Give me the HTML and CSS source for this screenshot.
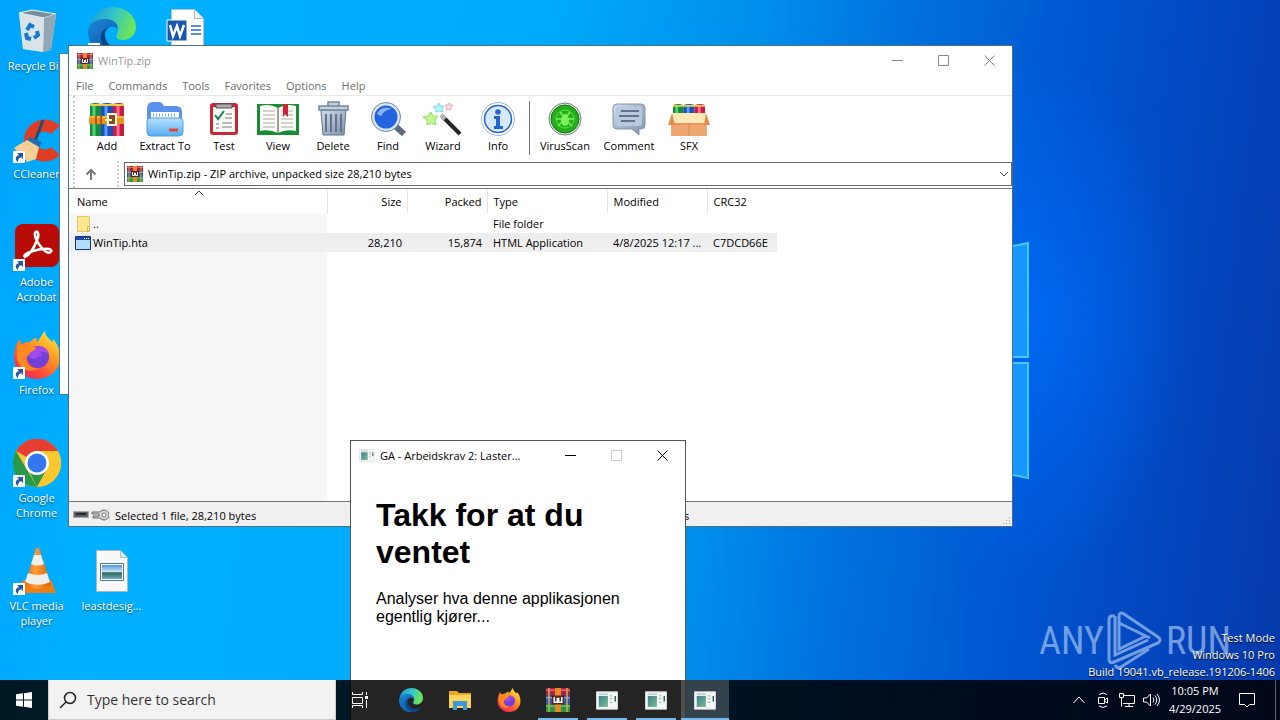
FILE: index.html
```html
<!DOCTYPE html>
<html lang="en">
<head>
<meta charset="utf-8">
<title>Desktop</title>
<link rel="stylesheet" href="styles.css">
</head>
<body>
<svg class="defs" aria-hidden="true">
  <defs>
    <linearGradient id="gEdge" x1="0" y1="0" x2="1" y2="0.3"><stop offset="0" stop-color="#1399dc"/><stop offset=".55" stop-color="#35c4c8"/><stop offset="1" stop-color="#6be45c"/></linearGradient>
    <linearGradient id="gEdge2" x1="0" y1="0" x2="1" y2="1"><stop offset="0" stop-color="#1b86d8"/><stop offset="1" stop-color="#0c4a92"/></linearGradient>
    <linearGradient id="gFox" x1=".9" y1="0" x2=".2" y2="1"><stop offset="0" stop-color="#fff14a"/><stop offset=".4" stop-color="#ff9a1f"/><stop offset=".75" stop-color="#ff4a3c"/><stop offset="1" stop-color="#e5265f"/></linearGradient>
    <linearGradient id="gBlue" x1="0" y1="0" x2="0" y2="1"><stop offset="0" stop-color="#b9e2ff"/><stop offset="1" stop-color="#58aef2"/></linearGradient>
    <linearGradient id="gSteel" x1="0" y1="0" x2="1" y2="1"><stop offset="0" stop-color="#d3deec"/><stop offset="1" stop-color="#7d90ab"/></linearGradient>
    <linearGradient id="gPic" x1="0" y1="0" x2="0" y2="1"><stop offset="0" stop-color="#4d94e0"/><stop offset=".5" stop-color="#cfe7f5"/><stop offset=".55" stop-color="#2c6652"/><stop offset="1" stop-color="#6fa8c4"/></linearGradient>
    <linearGradient id="gTeal" x1="0" y1="0" x2="1" y2="1"><stop offset="0" stop-color="#3f8494"/><stop offset="1" stop-color="#76b98c"/></linearGradient>
    <linearGradient id="gCone" x1="0" y1="0" x2="1" y2="0"><stop offset="0" stop-color="#e06a06"/><stop offset=".4" stop-color="#ff9a35"/><stop offset="1" stop-color="#d96504"/></linearGradient>
    <symbol id="edge" viewBox="0 0 48 48">
      <path d="M1 22C2 9 12 0 25 0c13 0 23 9 23 20 0 8-6 13-13 13-6 0-8-3-6-6 3-5-1-12-10-12C10 15 3 19 1 22z" fill="url(#gEdge)"/>
      <path d="M0 24C1 16 8 12 17 12c8 0 13 4 13 10-5-5-13-2-13 6 0 9 9 15 18 14 4 0 8-2 10-4-4 7-12 11-20 11C10 49 0 38 0 24z" fill="url(#gEdge2)"/>
      <path d="M17 28c0-4 2-8 6-9-7 1-11 7-10 14 1 8 8 14 17 15 7-1 12-5 15-10-3 3-7 4-11 4-10 0-17-6-17-14z" fill="#0a4384"/>
    </symbol>
    <symbol id="firefox" viewBox="0 0 48 48">
      <path d="M3 15c1-3 2-5 4-7 0 3 1 4 2 5 3-2 6-2 8-2 2-2 4-4 7-4-1 2-1 3 0 4 3-3 4-7 8-11 0 5 4 7 7 11 1-1 1-2 1-3 4 4 7 11 7 18 0 13-10 22-23 22S1 38 1 26c0-4 1-8 2-11z" fill="url(#gFox)"/>
      <circle cx="25" cy="26" r="11" fill="#7040d8"/>
      <path d="M14 22c3-5 10-8 16-6 4 2 6 5 6 8-3-3-6-4-9-3 1 1 2 2 2 4-3 0-5 1-7 3-3 0-6-2-8-6z" fill="#a04bea"/>
      <path d="M5 14c3-1 6 0 8 2 4-2 8-1 10 1-1 3-4 3-6 5-1 2-4 3-4 7 1 5 6 9 12 8-4 4-14 4-18-3-4-6-4-14-2-20z" fill="#ff8a22"/>
    </symbol>
    <symbol id="rar" viewBox="0 0 16 16">
      <path fill="#a52145" d="M0 0h16v5H0z"/><path fill="#2f55b5" d="M0 5h16v6H0z"/><path fill="#25964a" d="M0 11h16v5H0z"/>
      <path stroke="#ed637f" d="M0 1.500h16"/><path stroke="#729ce5" d="M0 6.500h16"/><path stroke="#64c76c" d="M0 12h16"/>
      <path d="M2 0v16M14 0v16" stroke="#d9a944"/>
      <path fill="#e98922" d="M6 0h4v16H6z"/><path fill="#5c2620" d="M4 5h8v6H4z"/><path d="M5.500 6v3.500h2V7h1v2.500h2V6" fill="none" stroke="#fff"/>
    </symbol>
    <symbol id="app" viewBox="0 0 24 20">
      <path d="M.5.500h23v19H.500z" fill="#f5f7f7" stroke="#d7dbdc"/><path fill="url(#gTeal)" d="M3 5h10v12H3z"/><path d="M3 3h10M15 5h3M15 8h3M15 12h3" stroke="#9eabb0"/><path d="M21 5v6" stroke="#29535e" stroke-width="1.500"/>
    </symbol>
    <symbol id="shortcut" viewBox="0 0 12 12"><path d="M0 0h12v12H0z" fill="#fff"/><path d="M4 2h6v6L8 6C6 7 5 8 5 11 1 8 3 5 6 4z" fill="#24579e"/></symbol>
    <symbol id="books" viewBox="0 0 34 34">
      <path fill="#148a42" d="M0 2q5-2 11 0v32H0z"/><path fill="#1c4fb8" d="M11 2q6-2 12 0v32H11z"/><path fill="#c61c45" d="M23 2q6-2 11 0v32H23z"/>
      <path d="M4 2v32" stroke="#5ad06c" stroke-width="3"/><path d="M16 2v32" stroke="#5c9cf8" stroke-width="3"/><path d="M28 2v32" stroke="#ff6f86" stroke-width="3"/>
      <path d="M0 3h11M11 3h12M23 3h11" stroke="#e8cf4a" stroke-width="2"/>
    </symbol>
  </defs>
</svg>

<main class="desktop">
  <svg class="pane-logo" viewBox="0 0 16 240" preserveAspectRatio="none" aria-hidden="true"><path d="M0 5 15 2v114H0zM0 122h15v115L0 234z" fill="#1696ff"/><path d="M0 5 15 2v114H0M0 122h15v115L0 234" fill="none" stroke="#43c8ff" stroke-width="2"/></svg>

  <div class="icons">
    <div class="icon c1 r1"><svg viewBox="0 0 48 48"><path d="M6 6 19 3 43 7 38 43 30 45 10 42z" fill="#c5d4df"/><path d="M6 6 19 3 43 7 31 11z" fill="#7790a0" stroke="#eef5f8"/><path d="M31 11 43 7 38 43 30 45z" fill="#93a6b4"/><path d="M6 6 31 11 30 45 10 42z" fill="#dce5e9" opacity=".9"/><path d="m14 23 3-5 4 2M24 24l1 4-4 3M18 32l-4-1-1-5" fill="none" stroke="#1479cf" stroke-width="4"/></svg><span>Recycle Bin</span></div>
    <div class="icon c1 r2"><svg viewBox="0 0 48 48"><path d="M47 11A21 21 0 1 0 47 40l-9-8a9 9 0 1 1 0-13z" fill="#df3d24"/><path d="M30 5 21 29" stroke="#1b4e7b" stroke-width="3"/><path d="m16 22 13 5-4 8-13-7z" fill="#246eae"/><path d="M1 33c5-4 9-5 13-8l12 7-3 12-9 3c-2-5-8-8-13-14z" fill="#f4cf96"/></svg><svg class="shortcut"><use href="#shortcut"/></svg><span>CCleaner</span></div>
    <div class="icon c1 r3"><svg viewBox="0 0 48 48"><rect x="2" y="1" width="44" height="43" rx="8" fill="#b90c06"/><path d="M12 34c-4-3 13-9 24-8 5 1 1 6-4 2-5-4-11-13-10-18 2-4 5 1 2 7-3 8-8 15-12 17z" fill="none" stroke="#fff" stroke-width="2.500"/></svg><svg class="shortcut"><use href="#shortcut"/></svg><span>Adobe<br>Acrobat</span></div>
    <div class="icon c1 r4"><svg><use href="#firefox"/></svg><svg class="shortcut"><use href="#shortcut"/></svg><span>Firefox</span></div>
    <div class="icon c1 r5"><svg viewBox="0 0 48 48"><circle cx="24" cy="24" r="24" fill="#fbc72f"/><path d="M24 24 3 12a24 24 0 0 1 42 0z" fill="#e63e31"/><path d="M3 12 24 48A24 24 0 0 1 3 12z" fill="#269a49"/><path d="m15 30 9 18 11-19z" fill="#269a49"/><path d="M24 48a24 24 0 0 0 21-36H24l10 18z" fill="#fbc72f"/><circle cx="24" cy="24" r="12" fill="#fff"/><circle cx="24" cy="24" r="9.500" fill="#3476ee"/></svg><svg class="shortcut"><use href="#shortcut"/></svg><span>Google<br>Chrome</span></div>
    <div class="icon c1 r6"><svg viewBox="0 0 48 48"><path d="M10 33h28l5 13H6z" fill="#ef7d13"/><path d="M23 1h3l12 37c-6 5-18 5-26 0z" fill="url(#gCone)"/><path d="M21 8h7l3 9q-7 3-13 0zM15 26q10 4 19 0l3 9q-12 6-25 0z" fill="#eeeeea"/></svg><svg class="shortcut"><use href="#shortcut"/></svg><span>VLC media<br>player</span></div>
    <div class="icon c2 r1"><svg><use href="#edge"/></svg><svg class="shortcut"><use href="#shortcut"/></svg></div>
    <div class="icon c2 r6"><svg viewBox="0 0 48 48"><path d="M8.500 3.500h24l7 7v34h-31z" fill="#f8f8f8" stroke="#aeb7bd"/><path d="M32.500 3.500v7h7" fill="#dcebf2" stroke="#aac3cf"/><path d="M12.500 16.500h23v17h-23z" fill="#fff" stroke="#507795"/><path d="M14 18h20v14H14z" fill="url(#gPic)"/></svg><span>leastdesig...</span></div>
    <div class="icon c3 r1"><svg viewBox="0 0 48 48"><path d="M8.500 2.500h23l9 9v34h-32z" fill="#fff" stroke="#bac2c8"/><path d="M31.500 2.500v9h9" fill="#edf1f5" stroke="#b0b8c0"/><path d="M28 19h10M28 23h10M28 27h10" stroke="#286bb5" stroke-width="1.500"/><path d="M4 13h20v21H4z" fill="#1856b0" stroke="#fff"/><path d="m7 18 3 11 4-10 3 10 4-11" fill="none" stroke="#fff" stroke-width="2.500"/></svg></div>
  </div>

  <div class="back-window"></div>

  <section class="window archive">
    <header class="titlebar">
      <svg class="app16"><use href="#rar"/></svg><span class="title">WinTip.zip</span>
      <button class="ctl" aria-label="Minimize"><svg viewBox="0 0 11 11"><path d="M0 5.500h11"/></svg></button>
      <button class="ctl" aria-label="Maximize"><svg viewBox="0 0 11 11"><path d="M.5.500h10v10H.500z"/></svg></button>
      <button class="ctl" aria-label="Close"><svg viewBox="0 0 11 11"><path d="m.5.500 10 10M10.500.500l-10 10"/></svg></button>
    </header>
    <nav class="menu"><button>File</button><button>Commands</button><button>Tools</button><button>Favorites</button><button>Options</button><button>Help</button></nav>
    <div class="toolbar">
      <button class="w50"><svg viewBox="0 0 40 36"><use href="#books" x="3" y="1" width="34" height="34"/><path d="M2 15h35v8H2z" fill="#e8931c"/><path d="M2 16h35" stroke="#ffdb73"/><path d="M9 14v10M14 14v10" stroke="#a95b16" stroke-width="2"/><path d="M21 13h8v11h-8zM18 19h7" fill="#825026" stroke="#fff4d8" stroke-width="2"/></svg>Add</button>
      <button class="w66"><svg viewBox="0 0 40 36"><path d="M2 8q0-7 6-7h6q3 0 5 4h12q6 0 6 6v18H2z" fill="#5a91ed"/><path d="M6 11h28v14H6z" fill="#f9fcff"/><path d="M8 14h24" stroke="#91a7ba" stroke-dasharray="1 2" stroke-width="3"/><path d="M2 20q0-3 4-3h29q3 0 3 4v10q0 4-4 4H6q-4 0-4-4z" fill="url(#gBlue)" stroke="#4c9ee9"/><path d="M24 29h9" stroke="#de4739" stroke-width="3"/></svg>Extract To</button>
      <button class="w52"><svg viewBox="0 0 40 36"><rect x="6" y="2" width="28" height="32" rx="3" fill="#cb2636"/><path d="M9 6h22v25H9z" fill="#f8faf8"/><path d="M12 3h16v4H12z" fill="#aaa" stroke="#555"/><path d="M11 14l3 4 6-8" fill="none" stroke="#14834a" stroke-width="2"/><path d="M22 13h6M21 17h7M12 23h3M18 22h10M12 27h3M18 26h10" stroke="#777"/></svg>Test</button>
      <button class="w56"><svg class="wide" viewBox="0 0 44 36"><path d="M1 3h42v31H1z" fill="#178b36"/><path d="M4 5q10-3 18 2 9-5 18-2v25q-10-2-18 2-9-4-18-2z" fill="#fafaf4"/><path d="M22 7v25" stroke="#9d9d94" stroke-width="2"/><path d="M7 10h12M7 14h12M7 18h12M7 22h12M7 26h12M25 10h12M25 14h12M25 18h12M25 22h12M25 26h12" stroke="#aaa"/><path d="M27 3h5v13l-3-3-2 3z" fill="#d11f37"/></svg>View</button>
      <button class="w54"><svg viewBox="0 0 40 36"><path d="M8 9h25l-2 25H10z" fill="url(#gSteel)" stroke="#60758d"/><path d="M13 13v18M18 13v18M23 13v18M28 13v18" stroke="#60738a" stroke-width="2"/><path d="M6 5h29v4H6zM15 5V1h11v4" fill="#c4d0dd" stroke="#71869c" stroke-width="1.500"/></svg>Delete</button>
      <button class="w56"><svg viewBox="0 0 40 36"><path d="m26 24 10 9" stroke="#5c6b7c" stroke-width="6"/><circle cx="18" cy="16" r="13" fill="#2464df" stroke="#dbe5ef" stroke-width="3"/><circle cx="18" cy="16" r="14.500" fill="none" stroke="#6f88a4"/><path d="M9 13q4-9 15-5-7 0-11 7z" fill="#8ab2ff"/></svg>Find</button>
      <button class="w54"><svg viewBox="0 0 40 36"><path d="m19 15 18 18" stroke="#242526" stroke-width="4"/><path d="m18 14 4 4" stroke="#b7b7b7" stroke-width="4"/><path d="m8 11 2 4 5 0-3 4 1 5-5-2-4 2 0-5-4-3 5-1z" fill="#c6f492" stroke="#8ce26a"/><path d="m16 2 1 3 4 0-2 3 1 3-4-1-3 1 0-3-3-2 4-1z" fill="#b6f8ff" stroke="#7edcec"/><path d="m26 2 1 2h3l-2 2v3l-3-1-2 1 1-3-2-2h3z" fill="#ffe2e7" stroke="#f5a5b1"/></svg>Wizard</button>
      <button class="w56"><svg viewBox="0 0 40 36"><circle cx="20" cy="18" r="16.500" fill="#fff" stroke="#99b6e4"/><circle cx="20" cy="18" r="13.500" fill="#d7e8fd" stroke="#2861bf" stroke-width="1.500"/><circle cx="20" cy="11" r="2.800" fill="#2563cf"/><path d="M16 15h6v10h3v3h-9v-3h2v-7h-2z" fill="#2563cf"/></svg>Info</button>
      <i class="sep"></i>
      <button class="w66"><svg viewBox="0 0 40 36"><circle cx="20" cy="18" r="16" fill="#e9efe9" stroke="#718076"/><circle cx="20" cy="18" r="14" fill="#26ad1c" stroke="#147217"/><circle cx="20" cy="18" r="9" fill="none" stroke="#4ee33b"/><path d="m15 11 3 4M25 11l-3 4M11 18h6M29 18h-6M13 25l4-4M27 25l-4-4" stroke="#7ef05a" stroke-width="1.500"/><ellipse cx="20" cy="19" rx="4" ry="6" fill="#7ef05a"/></svg>VirusScan</button>
      <button class="w62"><svg viewBox="0 0 40 36"><path d="M4 7q0-4 4-4h24q4 0 4 4v17q0 4-4 4h-2v6l-7-6H8q-4 0-4-4z" fill="url(#gSteel)" stroke="#8295ae"/><rect x="7" y="6" width="26" height="19" rx="2" fill="#b8c9dd"/><path d="M12 10h18M10 15h20M12 20h14" stroke="#48566d" stroke-width="1.500"/></svg>Comment</button>
      <button class="w58"><svg class="wide" viewBox="0 0 44 36"><use href="#books" x="6" y="1" width="32" height="34"/><path d="M4 17h36v18H4z" fill="#efa66f"/><path d="M5 12h34v10H5z" fill="#ffe8b8"/><path d="m1 24 4-12 3 12zM37 24l2-12 4 12z" fill="#e68b4e"/><path d="M5 23h34" stroke="#d48c5b"/><path d="M22 23v12" stroke="#d48c5b"/></svg>SFX</button>
    </div>
    <div class="address">
      <button class="up" aria-label="Up"><svg viewBox="0 0 12 12"><path d="M6 12V2M1.500 6.500 6 2l4.500 4.500"/></svg></button>
      <div class="combo"><svg class="app16"><use href="#rar"/></svg><select aria-label="Archive path"><option>WinTip.zip - ZIP archive, unpacked size 28,210 bytes</option></select><svg class="caret" viewBox="0 0 10 6"><path d="m1 1 4 4 4-4"/></svg></div>
    </div>
    <div class="list">
      <svg class="sort" viewBox="0 0 10 6"><path d="m1 5 4-4 4 4"/></svg>
      <table>
        <colgroup><col class="name"><col class="size"><col class="size"><col class="type"><col class="date"><col class="crc"></colgroup>
        <thead><tr><th>Name</th><th class="num">Size</th><th class="num">Packed</th><th>Type</th><th>Modified</th><th>CRC32</th></tr></thead>
        <tbody>
          <tr><td><span class="file"><svg viewBox="0 0 16 16"><path d="M2.500.500h12v11l-2 4h-10z" fill="#ffe68f" stroke="#e8c766"/><path d="M12.500 15.500v-5h2v5z" fill="#ffedae" stroke="#dfb84f"/></svg>..</span></td><td></td><td></td><td>File folder</td><td></td><td></td></tr>
          <tr class="selected"><td><span class="file"><svg viewBox="0 0 16 16"><path d="M.5 1.500h15v13H.500z" fill="#b3dcfb" stroke="#17345f"/><path d="M1 2h14v3H1z" fill="#1b4bb0"/><path d="M9 3.500h5" stroke="#fff" stroke-dasharray="1 1"/></svg>WinTip.hta</span></td><td class="num">28,210</td><td class="num">15,874</td><td>HTML Application</td><td>4/8/2025 12:17 ...</td><td>C7DCD66E</td></tr>
        </tbody>
      </table>
    </div>
    <footer class="status">
      <svg class="drive" viewBox="0 0 36 12"><path d="M.5 2.500h15v6H.500z" fill="#5c6368" stroke="#a3a8ab"/><path d="M3 5h10" stroke="#25292c" stroke-width="2"/><path d="M31 1a5 5 0 1 1-4 8h-7V7h6V5h-7V3h8q1-2 4-2z" fill="#d2d2d2" stroke="#686868"/><circle cx="31" cy="6" r="2" fill="#fff" stroke="#777"/></svg>
      <span class="selected-info">Selected 1 file, 28,210 bytes</span><span class="total-info">Total 1 file, 28,210 bytes</span>
      <i class="grip"></i>
    </footer>
  </section>

  <section class="window loader">
    <header class="titlebar">
      <svg class="app16 page"><use href="#app"/></svg><span class="title">GA - Arbeidskrav 2: Laster...</span>
      <button class="ctl" aria-label="Minimize"><svg viewBox="0 0 11 11"><path d="M0 5.500h11"/></svg></button>
      <button class="ctl" disabled aria-label="Maximize"><svg viewBox="0 0 11 11"><path d="M.5.500h10v10H.500z"/></svg></button>
      <button class="ctl" aria-label="Close"><svg viewBox="0 0 11 11"><path d="m.5.500 10 10M10.500.500l-10 10"/></svg></button>
    </header>
    <article><h1>Takk for at du ventet</h1><p>Analyser hva denne applikasjonen egentlig kjører...</p></article>
  </section>

  <div class="watermark"><span>ANY</span><svg viewBox="0 0 56 60"><path d="M8 5H5q-3 0-3 4v39q0 5 5 3l44-19q4-3 0-6L17 3q-5-3-5 3v32l27-13M12 12l31 15M8 54q2 4 6 2l28-18M8 5v39l33-15" fill="none" stroke="currentColor" stroke-width="3"/></svg><span>RUN</span></div>
  <div class="build">Test Mode<br>Windows 10 Pro<br>Build 19041.vb_release.191206-1406</div>
</main>

<footer class="taskbar">
  <button class="start" aria-label="Start"><svg viewBox="0 0 16 16"><path d="M0 2.300 7 1.300V7.500H0zM8 1.200 16 0v7.500H8zM0 8.500h7v6.200l-7-1zM8 8.500h8V16l-8-1.200z" fill="#fff"/></svg></button>
  <label class="search"><svg viewBox="0 0 18 18"><circle cx="11" cy="7" r="5.500"/><path d="m7 11-6 6"/></svg><input type="text" placeholder="Type here to search" aria-label="Search"></label>
  <button class="view" aria-label="Task View"><svg viewBox="0 0 18 16"><path d="M1.500 0v2.500h10V0M1.500 5.500h10v6h-10zM1.500 16v-2.500h10V16M15.500 0v3M15.500 8v8" fill="none" stroke="#fff"/><path d="M14 4h3v3h-3z" fill="#fff"/></svg></button>
  <div class="tasks">
    <button aria-label="Edge"><svg><use href="#edge"/></svg></button>
    <button aria-label="File Explorer"><svg viewBox="0 0 24 24"><path d="M1 3h8l2 2h12v15H1z" fill="#eba923"/><path d="M1 7h22v13H1z" fill="#ffd45a"/><path d="M5 13h14v9h-4v-4H9v4H5z" fill="#3b98da"/></svg></button>
    <button aria-label="Firefox"><svg><use href="#firefox"/></svg></button>
    <button class="open" aria-label="WinRAR"><svg><use href="#rar"/></svg></button>
    <button class="open" aria-label="Application"><svg class="page"><use href="#app"/></svg></button>
    <button class="open" aria-label="Application"><svg class="page"><use href="#app"/></svg></button>
    <button class="open active" aria-label="GA - Arbeidskrav 2"><svg class="page"><use href="#app"/></svg></button>
  </div>
  <div class="tray">
    <button aria-label="Show hidden icons"><svg viewBox="0 0 18 18"><path d="m3.500 12 5.500-6 5.500 6"/></svg></button>
    <button aria-label="Meet Now"><svg viewBox="0 0 18 18"><path d="M4.500 6.500h6v6h-6zM10.500 9l3-2v5l-3-2M5 3.500q4-3 8 0M5 15q4 3 8 0"/></svg></button>
    <button aria-label="Network"><svg viewBox="0 0 18 18"><path d="M5 4.500h11.500v8H5M11 12.500v3M7 15.500h8M1.500 2.500h4v4h-4zM3.500 6.500v9"/></svg></button>
    <button aria-label="Volume"><svg viewBox="0 0 18 18"><path d="M1.500 7h3l4-4v12l-4-4h-3zM11 6.500q2 2.500 0 5M13 4.500q3.500 4.500 0 9M15 3q5 6 0 12"/></svg></button>
    <time>10:05 PM<br>4/29/2025</time>
    <button class="notice" aria-label="Notifications"><svg viewBox="0 0 18 18"><path d="M1.500 2.500h15v11h-5L9 16l-2.500-2.500h-5z"/></svg></button>
    <i class="peek"></i>
  </div>
</footer>
</body>
</html>
```
FILE: styles.css
```css
* { box-sizing: border-box; }
body {
  margin: 0;
  height: 100vh;
  overflow: hidden;
  position: relative;
  font: 11px/15px "Open Sans", "Noto Sans", sans-serif;
  color: #000;
}
button, input, select { font: inherit; color: inherit; border: 0; padding: 0; background: none; }
svg { display: block; flex: none; }
.defs { position: absolute; width: 0; height: 0; }

.desktop {
  position: relative;
  height: 100%;
  overflow: hidden;
  background:
    radial-gradient(ellipse 160px 260px at 1030px 320px, rgba(0, 108, 250, .8), rgba(0, 100, 245, 0)),
    linear-gradient(97deg, #00a4fa 0, #00b1ff 12%, #00aafa 40%, #0090ec 55%, #0070de 67%, #0054d0 80%, #0442b9 93%, #0439aa 100%);
}
.pane-logo { position: absolute; left: 1013px; top: 241px; width: 16px; height: 240px; }

.icons {
  position: absolute;
  left: -1px;
  top: 7px;
  display: grid;
  grid-template-columns: repeat(3, 75px);
  grid-template-rows: repeat(6, 108px);
}
.icon { position: relative; display: flex; flex-direction: column; align-items: center; gap: 3px; color: #fff; text-align: center; text-shadow: 0 1px 2px rgba(0, 0, 0, .6); white-space: nowrap; }
.icon > svg { width: 48px; height: 48px; }
.icon > .shortcut { position: absolute; left: 14px; top: 36px; width: 12px; height: 12px; }
.c1 { grid-column: 1; } .c2 { grid-column: 2; } .c3 { grid-column: 3; }
.r1 { grid-row: 1; } .r2 { grid-row: 2; } .r3 { grid-row: 3; } .r4 { grid-row: 4; } .r5 { grid-row: 5; } .r6 { grid-row: 6; }

.back-window { position: absolute; left: 59px; top: 53px; width: 500px; height: 342px; background: #fff; border: 1px solid #3f7fa5; }
.window { position: absolute; display: flex; flex-direction: column; background: #fff; border: 1px solid #4f6d80; }
.archive { left: 68px; top: 45px; width: 945px; height: 482px; }
.loader { left: 350px; top: 440px; width: 336px; height: 290px; border-color: #555; }

.titlebar { display: flex; align-items: center; flex: none; height: 29px; margin-bottom: 1px; padding-left: 8px; }
.title { flex: 1; padding-left: 5px; white-space: nowrap; }
.archive .title { color: #999; }
.app16 { width: 16px; height: 16px; }
.app16.page { height: 13px; }
.ctl { display: flex; align-items: center; justify-content: center; width: 46px; height: 29px; }
.ctl svg { width: 11px; height: 11px; fill: none; stroke: #000; }
.archive .ctl svg { stroke: #888; }
.ctl:disabled svg { stroke: #ccc; }

.menu { display: flex; align-items: center; gap: 15px; height: 20px; padding-left: 7px; color: #6d6d6d; border-bottom: 1px solid #e8e8e8; flex: none; }
.toolbar { display: flex; height: 63px; margin-left: 4px; padding: 5px 0 0 7px; border-left: 2px dotted #ccc; flex: none; }
.toolbar button { display: flex; flex-direction: column; align-items: center; gap: 1px; white-space: nowrap; }
.toolbar button svg { width: 40px; height: 36px; margin: 0 auto; }
.toolbar button svg.wide { width: 44px; }
.w50 { width: 50px; } .w52 { width: 52px; } .w54 { width: 54px; } .w56 { width: 56px; } .w58 { width: 58px; } .w62 { width: 62px; } .w66 { width: 66px; }
.sep { width: 1px; height: 54px; margin: 0 2px 0 3px; background: #777; }

.address { display: flex; height: 29px; flex: none; align-items: center; margin-left: 4px; border-left: 2px dotted #ccc; }
.up { display: flex; align-items: center; width: 44px; height: 26px; padding-left: 10px; border-right: 2px dotted #ccc; }
.up svg { width: 12px; height: 12px; fill: none; stroke: #777; stroke-width: 2; }
.combo { flex: 1; display: flex; align-items: center; height: 24px; margin-left: 5px; padding: 0 2px; border: 1px solid #666; }
.combo select { flex: 1; appearance: none; padding-left: 5px; }
.caret, .sort { width: 10px; height: 6px; fill: none; stroke: #444; }

.list { position: relative; flex: 1; border: solid #777; border-width: 1px 0; background: linear-gradient(#f6f6f6, #f6f6f6) 0 0 / 258px 100% no-repeat; }
.sort { position: absolute; left: 125px; top: 1px; }
table { border-collapse: collapse; table-layout: fixed; width: 708px; }
th { height: 25px; padding: 0 6px; font-weight: 400; text-align: left; background: #fff; border-right: 1px solid #e5e5e5; }
th:first-child { padding-left: 8px; }
td { height: 19px; padding: 0 6px; white-space: nowrap; line-height: 17px; }
th.num, td.num { padding-right: 5px; text-align: right; }
.name { width: 258px; } .size { width: 80px; } .type { width: 120px; } .date { width: 100px; } .crc { width: 70px; }
.selected { background: #eee; }
.file { display: flex; align-items: center; gap: 2px; }
.file svg { width: 16px; height: 16px; }
thead + tbody td:last-child { padding-right: 0; }
.list::after { content: ""; position: absolute; left: 708px; right: 0; top: 0; height: 25px; background: #fff; }

.status { display: flex; align-items: center; flex: none; height: 24px; padding: 2px 0 0 4px; background: #f0f0f0; }
.drive { width: 36px; height: 12px; }
.status span { padding-left: 5px; }
.selected-info { width: 452px; border-left: 1px solid #ddd; }
.total-info { flex: 1; }
.grip { width: 9px; height: 9px; margin: 10px 1px 0 0; background: radial-gradient(circle, #999 1px, transparent 1px) 0 0 / 3px 3px; clip-path: polygon(100% 0, 100% 100%, 0 100%); }

article { padding: 26px 60px 0 25px; font: 16px/18px "Liberation Sans", Arial, sans-serif; }
h1 { margin: 0; font-size: 32px; line-height: 37px; }
p { margin: 19px 0 0; }

.watermark { position: absolute; right: 49px; bottom: 49px; display: flex; align-items: center; gap: 3px; color: rgba(190, 215, 245, .6); font: 38px/60px "Liberation Sans Narrow", "Roboto Condensed", "DejaVu Sans Condensed", sans-serif; }
.watermark svg { width: 56px; height: 60px; }
.build { position: absolute; right: 5px; bottom: 40px; color: #fff; text-align: right; line-height: 17px; text-shadow: 0 1px 1px #000; }

.taskbar { position: absolute; left: 0; right: 0; bottom: 0; height: 40px; display: flex; color: #fff; background: rgba(0, 0, 0, .86); }
.taskbar button { display: flex; align-items: center; justify-content: center; }
.start, .view { width: 48px; }
.start svg { width: 16px; height: 16px; }
.search { display: flex; align-items: center; gap: 10px; width: 288px; padding: 0 10px; background: #f2f2f2; border: 1px solid #ccc; border-top-color: #eee; }
.search svg { width: 18px; height: 18px; fill: none; stroke: #222; stroke-width: 1.5; }
.search input { flex: 1; min-width: 0; color: #333; font-size: 14px; line-height: 20px; }
.search input::placeholder { color: #333; opacity: 1; }
.view svg { width: 18px; height: 16px; }
.tasks { display: flex; gap: 1px; margin-left: 3px; }
.tasks button { width: 48px; }
.tasks svg { width: 24px; height: 24px; }
.tasks svg.page { width: 22px; height: 19px; }
.open { background: linear-gradient(#76b9ed, #76b9ed) center bottom / 40px 2px no-repeat; }
.active { background-color: rgba(255, 255, 255, .2); background-size: 100% 2px; }
.tray { display: flex; margin-left: auto; }
.tray button { width: 24px; }
.tray svg { width: 18px; height: 18px; fill: none; stroke: #fff; }
.tray time { width: 64px; padding-top: 2px; text-align: center; line-height: 18px; }
.tray .notice { width: 40px; margin-right: 8px; }
.peek { width: 5px; border-left: 1px solid #59636e; }
```
